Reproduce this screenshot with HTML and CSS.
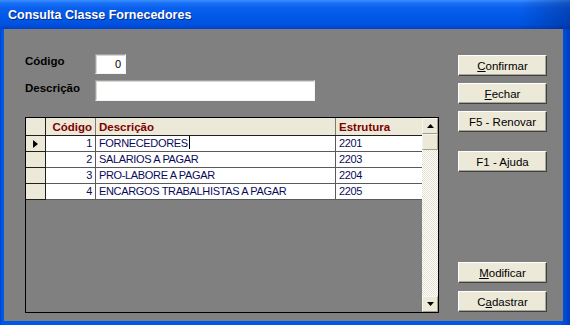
FILE: index.html
```html
<!DOCTYPE html>
<html lang="pt">
<head>
    <meta charset="UTF-8">
    <title>Consulta Classe Fornecedores</title>
    <link rel="stylesheet" href="styles.css">
</head>
<body>
    <div class="janela">
        <div class="titulo">Consulta Classe Fornecedores</div>
        <div class="corpo">
            <div class="esquerda">
                <div class="campo">
                    <label>Código</label>
                    <div class="caixa codigo">0</div>
                </div>
                <div class="campo campo2">
                    <label>Descrição</label>
                    <div class="caixa descricao"></div>
                </div>
                <div class="grade">
                    <div class="tabela">
                        <table>
                            <colgroup>
                                <col class="cInd">
                                <col class="cCod">
                                <col class="cDesc">
                                <col class="cEst">
                            </colgroup>
                            <thead>
                                <tr>
                                    <th class="ind"></th>
                                    <th class="num">Código</th>
                                    <th>Descrição</th>
                                    <th>Estrutura</th>
                                </tr>
                            </thead>
                            <tbody>
                                <tr>
                                    <td class="ind">
                                        <svg width="7" height="10" viewBox="0 0 7 10"><path d="M1 1 L6 5 L1 9 Z" fill="#000"/></svg>
                                    </td>
                                    <td class="num">1</td>
                                    <td>FORNECEDORES<span class="cursor"></span></td>
                                    <td>2201</td>
                                </tr>
                                <tr>
                                    <td class="ind"></td>
                                    <td class="num">2</td>
                                    <td>SALARIOS A PAGAR</td>
                                    <td>2203</td>
                                </tr>
                                <tr>
                                    <td class="ind"></td>
                                    <td class="num">3</td>
                                    <td>PRO-LABORE A PAGAR</td>
                                    <td>2204</td>
                                </tr>
                                <tr>
                                    <td class="ind"></td>
                                    <td class="num">4</td>
                                    <td>ENCARGOS TRABALHISTAS A PAGAR</td>
                                    <td>2205</td>
                                </tr>
                            </tbody>
                        </table>
                    </div>
                    <div class="rolagem">
                        <div class="seta">
                            <svg width="7" height="4" viewBox="0 0 7 4"><path d="M0 4 L3.5 0 L7 4 Z" fill="#000"/></svg>
                        </div>
                        <div class="polegar"></div>
                        <div class="trilho"></div>
                        <div class="seta">
                            <svg width="7" height="4" viewBox="0 0 7 4"><path d="M0 0 L3.5 4 L7 0 Z" fill="#000"/></svg>
                        </div>
                    </div>
                </div>
            </div>
            <div class="botoes">
                <div class="botao b1"><span><u>C</u>onfirmar</span></div>
                <div class="botao b2"><span><u>F</u>echar</span></div>
                <div class="botao b2"><span>F5 - Renovar</span></div>
                <div class="botao b3"><span>F1 - Ajuda</span></div>
                <div class="botao b4"><span><u>M</u>odificar</span></div>
                <div class="botao b5"><span>C<u>a</u>dastrar</span></div>
            </div>
        </div>
    </div>
</body>
</html>
```

FILE: styles.css
```css
html, body {
    margin: 0;
    padding: 0;
    font-family: "Liberation Sans", Arial, sans-serif;
}
.janela {
    width: 570px;
    height: 325px;
    display: flex;
    flex-direction: column;
    background: linear-gradient(to right, #0040c8 0, #0058e6 2px, #0058e6 560px, #003cc0 570px);
}
.titulo {
    height: 29px;
    box-sizing: border-box;
    padding: 8px 0 0 8px;
    color: white;
    font-weight: bold;
    font-size: 12.5px;
    text-shadow: 1px 1px 0 #0a2a8a;
    background:
        linear-gradient(to right, rgba(0,0,0,0) 0, rgba(0,0,0,0) 520px, rgba(0,20,90,0.35) 570px),
        linear-gradient(to bottom, #3c8fff 0, #1a72f8 3px, #0a5fec 8px, #0058e6 60%, #0052de 85%, #0040c8 100%);
}
.corpo {
    flex: 1;
    margin: 0 7px 4px 4px;
    background: #808080;
    display: flex;
}
.esquerda {
    padding: 25px 0 0 21px;
    width: 414px;
}
.campo {
    display: flex;
    align-items: flex-start;
}
.campo2 {
    margin-top: 6px;
}
label {
    display: block;
    width: 70px;
    padding-top: 1px;
    font-size: 11.5px;
    font-weight: bold;
    color: black;
}
.campo2 label {
    padding-top: 2px;
}
.caixa {
    box-sizing: border-box;
    background: white;
    border: 1px solid;
    border-color: #a0a0a0 #f4f4f4 #f4f4f4 #a0a0a0;
    box-shadow: inset 1px 1px 0 #d8d8d0;
    font-size: 11px;
}
.codigo {
    width: 31px;
    height: 20px;
    text-align: right;
    padding: 3px 4px 0 0;
}
.descricao {
    width: 220px;
    height: 21px;
}
.grade {
    margin-top: 16px;
    width: 414px;
    height: 196px;
    box-sizing: border-box;
    border: 1px solid black;
    display: flex;
}
.tabela {
    width: 396px;
    overflow: hidden;
}
table {
    table-layout: fixed;
    border-collapse: collapse;
    width: 397px;
    margin: -1px 0 0 -1px;
}
.cInd { width: 20px; }
.cCod { width: 50px; }
.cDesc { width: 240px; }
.cEst { width: 87px; }
th, td {
    border: 1px solid #5a5a5a;
    padding: 0 3px;
    white-space: nowrap;
    overflow: hidden;
    text-align: left;
}
th {
    height: 17px;
    background: #ece9d8;
    color: #800000;
    font-size: 11.5px;
    font-weight: bold;
    border-color: #5a5a5a #7a7a7a #202020 #7a7a7a;
}
td {
    height: 15px;
    background: white;
    color: #0a0a5a;
    font-size: 11px;
    letter-spacing: -0.35px;
    line-height: 15px;
}
.num {
    text-align: right;
}
.ind {
    background: #ece9d8;
    border-color: #202020;
    padding: 0 0 0 6px;
}
.ind svg {
    display: block;
}
.cursor {
    display: inline-block;
    width: 1px;
    height: 13px;
    margin-left: 1px;
    vertical-align: -2px;
    background: black;
}
.rolagem {
    width: 16px;
    display: flex;
    flex-direction: column;
}
.seta, .polegar {
    box-sizing: border-box;
    height: 16px;
    background: #ece9d8;
    border: 1px solid;
    border-color: #f6f5ee #a0a090 #a0a090 #f6f5ee;
    display: flex;
    justify-content: center;
    align-items: center;
}
.trilho {
    flex: 1;
    background: repeating-conic-gradient(#ffffff 0 25%, #e4e1d0 0 50%) 0 0 / 2px 2px;
}
.botoes {
    margin-left: 19px;
    display: flex;
    flex-direction: column;
}
.botao {
    box-sizing: border-box;
    width: 89px;
    height: 21px;
    background: #ece9d8;
    border: 1px solid;
    border-color: #ffffff #404040 #404040 #ffffff;
    box-shadow: inset -1px -1px 0 #a8a698;
    display: flex;
    justify-content: center;
    align-items: center;
    font-size: 11.5px;
    color: black;
}
.b1 { margin-top: 26px; }
.b2 { margin-top: 7px; }
.b3 { margin-top: 19px; }
.b4 { margin-top: 90px; }
.b5 { margin-top: 8px; }
```
